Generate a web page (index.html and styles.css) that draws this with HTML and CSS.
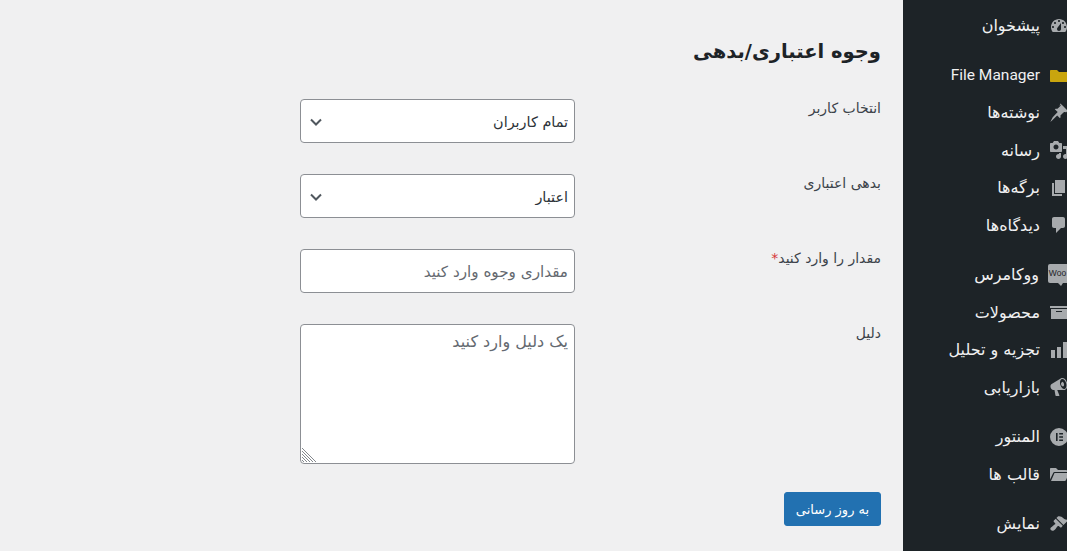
FILE: index.html
```html
<!DOCTYPE html>
<html lang="fa" dir="rtl">
<head>
<meta charset="utf-8">
<title>وجوه اعتباری/بدهی</title>
<link rel="stylesheet" href="styles.css">
</head>
<body>
<nav class="sidebar">
  <ul class="group">
    <li class="item"><svg class="icon" viewBox="0 0 20 20"><path d="M3.76 16h12.48c1.1-1.37 1.76-3.11 1.76-5 0-4.42-3.58-8-8-8s-8 3.58-8 8c0 1.89.66 3.63 1.76 5zM10 4c.55 0 1 .45 1 1s-.45 1-1 1-1-.45-1-1 .45-1 1-1zM6 6c.55 0 1 .45 1 1s-.45 1-1 1-1-.45-1-1 .45-1 1-1zm8 0c.55 0 1 .45 1 1s-.45 1-1 1-1-.45-1-1 .45-1 1-1zm-5.37 5.55L12 7v6c0 1.1-.9 2-2 2s-2-.9-2-2c0-.57.24-1.08.63-1.45zM4 10c.55 0 1 .45 1 1s-.45 1-1 1-1-.45-1-1 .45-1 1-1zm12 0c.55 0 1 .45 1 1s-.45 1-1 1-1-.45-1-1 .45-1 1-1z" fill-rule="evenodd"/></svg><span>پیشخوان</span></li>
  </ul>
  <ul class="group">
    <li class="item"><svg class="icon icon-yellow" viewBox="0 0 20 20"><path d="M1 6c0-.6.4-1 1-1h6l2 2h8c.6 0 1 .4 1 1v8c0 .6-.4 1-1 1H2c-.6 0-1-.4-1-1z"/></svg><span class="latin">File Manager</span></li>
    <li class="item"><svg class="icon" viewBox="0 0 20 20"><path d="M10.44 3.02l1.82-1.82 6.55 6.55-1.82 1.82c-.74-.56-1.74-.62-2.49-.07l-3.1 3.1c.24.91.19 1.93-.37 2.7l-2.87-2.88-5.12 5.13L1.3 18.9l2.4-4.72 4.97-5.14-2.88-2.87c.77-.56 1.79-.61 2.7-.37l3.1-3.1c.55-.75.49-1.75-.07-2.49z"/></svg><span>نوشته‌ها</span></li>
    <li class="item"><svg class="icon" viewBox="0 0 20 20"><path d="M13 11V4c0-.55-.45-1-1-1h-1.67L9 1H5L3.67 3H2c-.55 0-1 .45-1 1v7c0 .55.45 1 1 1h10c.55 0 1-.45 1-1zM7 4.5c1.38 0 2.5 1.12 2.5 2.5S8.38 9.5 7 9.5 4.5 8.38 4.5 7 5.62 4.5 7 4.5zM14 6h5v10.5c0 1.38-1.12 2.5-2.5 2.5S14 17.88 14 16.5s1.12-2.5 2.5-2.5c.17 0 .34.02.5.05V9h-3V6zm-4 8.05V13h2v3.5c0 1.38-1.12 2.5-2.5 2.5S7 17.88 7 16.5 8.12 14 9.5 14c.17 0 .34.02.5.05z"/></svg><span>رسانه</span></li>
    <li class="item"><svg class="icon" viewBox="0 0 20 20"><path d="M6 15V2h10v13H6zm-1 1h8v2H3V5h2v11z"/></svg><span>برگه‌ها</span></li>
    <li class="item"><svg class="icon" viewBox="0 0 20 20"><path d="M5 2h9c1.1 0 2 .9 2 2v7c0 1.1-.9 2-2 2h-2l-5 5v-5H5c-1.1 0-2-.9-2-2V4c0-1.1.9-2 2-2z"/></svg><span>دیدگاه‌ها</span></li>
  </ul>
  <ul class="group">
    <li class="item"><span class="woo"><span class="woo-text">Woo</span></span><span>ووکامرس</span></li>
    <li class="item"><svg class="icon" viewBox="0 0 20 20"><path d="M19 4v2H1V4h18zM2 7h16v10H2V7zm11 3V9H7v1h6z"/></svg><span>محصولات</span></li>
    <li class="item"><svg class="icon" viewBox="0 0 20 20"><path d="M18 18V2h-4v16h4zm-6 0V7H8v11h4zm-6 0v-8H2v8h4z"/></svg><span>تجزیه و تحلیل</span></li>
    <li class="item"><svg class="icon" viewBox="0 0 20 20"><path d="M18.15 5.94c.46 1.62.38 3.22-.02 4.48-.42 1.28-1.26 2.18-2.3 2.48-.16.06-.26.06-.4.06-.06.02-.12.02-.18.02-.06.02-.14.02-.22.02h-6.8l2.22 5.5c.02.14-.06.26-.14.34-.08.1-.24.16-.34.16H6.95c-.1 0-.26-.06-.34-.16-.08-.08-.16-.2-.14-.34l-1-5.5H4.25l-.02-.02c-.5.06-1.08-.18-1.54-.62s-.88-1.08-1.06-1.88c-.24-.8-.2-1.56-.02-2.2.18-.62.58-1.08 1.06-1.3l.02-.02 9-5.4c.1-.06.18-.1.24-.16.06-.04.14-.08.24-.12.16-.08.28-.12.5-.18 1.04-.3 2.24.1 3.22 1 .98.88 1.8 2.24 2.26 3.86zm-2.58 5.98h-.02c.4-.1.74-.34 1.04-.7.58-.7.86-1.76.86-3.04 0-.64-.1-1.3-.28-1.98-.34-1.36-1.02-2.5-1.78-3.24s-1.68-1.1-2.46-.88c-.82.22-1.4.96-1.7 2-.32 1.04-.28 2.36.06 3.72.38 1.36 1 2.5 1.8 3.24.78.74 1.62 1.1 2.48.88zm-2.54-7.08c.22-.04.42-.02.62.04.38.16.76.48 1.02 1s.42 1.2.42 1.78c0 .3-.04.56-.12.8-.18.48-.44.84-.86.94-.34.1-.8-.06-1.14-.4-.36-.32-.66-.8-.82-1.36-.16-.58-.16-1.12 0-1.6.16-.44.48-.76.88-.88z"/></svg><span>بازاریابی</span></li>
  </ul>
  <ul class="group">
    <li class="item"><svg class="icon" viewBox="0 0 20 20"><path fill-rule="evenodd" d="M10 1a9 9 0 1 1 0 18 9 9 0 0 1 0-18zM7 6v8h1.6V6zm3.2 0v1.6H14V6zm0 3.2v1.6H14V9.2zm0 3.2V14H14v-1.6z"/></svg><span>المنتور</span></li>
    <li class="item"><svg class="icon" viewBox="0 0 20 20"><path d="M1 5c0-.6.4-1 1-1h5l2 2h8c.6 0 1 .4 1 1v1H5.5c-.6 0-1 .3-1.2.8L1 15.500zM5.500 9H20l-3 7c-.2.6-.7 1-1.300 1H2z"/></svg><span>قالب ها</span></li>
  </ul>
  <ul class="group">
    <li class="item"><svg class="icon" viewBox="0 0 20 20"><path d="M14.48 11.06L7.41 3.99l1.5-1.5c.5-.56 2.3-.47 3.51.32 1.21.8 1.43 1.28 2.91 2.1 1.18.64 2.45 1.26 4.45.85zm-.71.71L6.700 4.700 4.930 6.470c-.39.39-.39 1.020 0 1.410l1.060 1.060c.39.39.39 1.030 0 1.420-.6.6-1.430 1.110-2.210 1.690-.35.26-.7.53-1.010.84C1.430 13.230.76 14.910 1.980 16.100c1.200 1.200 2.850.55 4.100-.7.3-.3.58-.65.84-1 .58-.78 1.090-1.600 1.690-2.200.39-.39 1.030-.39 1.420 0l1.060 1.060c.39.39 1.020.39 1.410 0z"/></svg><span>نمایش</span></li>
  </ul>
</nav>
<main class="main">
  <h1 class="title">وجوه اعتباری/بدهی</h1>
  <form class="form">
    <div class="row">
      <label class="label">انتخاب کاربر</label>
      <div class="control">
        <select class="field select"><option>تمام کاربران</option></select>
        <svg class="chevron" viewBox="0 0 12 8"><path d="M1 1.500l5 5 5-5"/></svg>
      </div>
    </div>
    <div class="row">
      <label class="label">بدهی اعتباری</label>
      <div class="control">
        <select class="field select"><option>اعتبار</option></select>
        <svg class="chevron" viewBox="0 0 12 8"><path d="M1 1.500l5 5 5-5"/></svg>
      </div>
    </div>
    <div class="row">
      <label class="label">مقدار را وارد کنید<span class="req">*</span></label>
      <div class="control">
        <input class="field field-input" type="text" placeholder="مقداری وجوه وارد کنید">
      </div>
    </div>
    <div class="row">
      <label class="label">دلیل</label>
      <div class="control">
        <textarea class="field area" placeholder="یک دلیل وارد کنید"></textarea>
        <svg class="grip" viewBox="0 0 15 15"><path d="M1 3l11 11M1 6l8 8M1 9l5 5M1 12l2 2M1 0l14 14"/></svg>
      </div>
    </div>
    <div class="actions">
      <button class="button" type="button">به روز رسانی</button>
    </div>
  </form>
</main>
</body>
</html>
```
FILE: styles.css
```css
* { box-sizing: border-box; }
html, body { margin: 0; height: 100%; }
body {
  display: flex;
  height: 551px;
  overflow: hidden;
  background: #f0f0f1;
  font-family: "DejaVu Sans", "Noto Sans", sans-serif;
  font-size: 13px;
  color: #3c434a;
}
.sidebar {
  width: 164px;
  flex: none;
  background: #1d2327;
  padding-top: 7px;
  overflow: hidden;
}
.group {
  list-style: none;
  margin: 0 0 12px;
  padding: 0;
}
.item {
  display: flex;
  align-items: center;
  gap: 9px;
  height: 37.5px;
  color: #f0f0f1;
  font-size: 16px;
  white-space: nowrap;
}
.latin { font-family: Roboto, sans-serif; font-size: 15.5px; }
.icon {
  width: 20px;
  height: 20px;
  flex: none;
  margin-inline-start: -2px;
  fill: #a7aaad;
}
.icon-yellow { fill: #c9a50e; }
.woo {
  position: relative;
  width: 19px;
  height: 19px;
  flex: none;
  margin-top: -3px;
  display: flex;
  align-items: center;
  justify-content: center;
  background: #a7aaad;
  border-radius: 2px 0 0 2px;
}
.woo::after {
  content: "";
  position: absolute;
  left: 10px;
  bottom: -3px;
  border-top: 3px solid #a7aaad;
  border-left: 3px solid transparent;
  border-right: 2px solid transparent;
}
.woo-text {
  direction: ltr;
  font-family: "Liberation Sans", sans-serif;
  font-size: 8.5px;
  color: #1d2327;
}
.main {
  flex: 1;
  padding: 38px 22px 0 0;
}
.title {
  margin: 0 0 33px;
  font-size: 19.5px;
  line-height: 28px;
  font-weight: 700;
  color: #1d2327;
}
.form { display: flex; flex-direction: column; gap: 31px; }
.row {
  display: grid;
  grid-template-columns: 306px 275px;
}
.label { padding-top: 0; line-height: 18px; font-size: 14px; }
.req { color: #d63638; }
.control { position: relative; display: flex; }
.field {
  width: 275px;
  height: 44px;
  padding: 0 6px;
  border: 1px solid #8c8f94;
  border-radius: 4px;
  background: #fff;
  color: #2c3338;
  font-family: inherit;
  font-size: 14.4px;
  direction: rtl;
}
.field-input { font-size: 15.2px; padding-top: 1px; }
.field::placeholder { color: #646970; opacity: 1; }
.select { appearance: none; padding-top: 2px; }
.area { height: 140px; padding: 6px; line-height: 22px; font-size: 16px; resize: none; }
.chevron {
  position: absolute;
  left: 10px;
  top: 19px;
  width: 12px;
  height: 8px;
  fill: none;
  stroke: #50575e;
  stroke-width: 2;
  pointer-events: none;
}
.grip {
  position: absolute;
  left: 1px;
  bottom: 1px;
  width: 15px;
  height: 15px;
  fill: none;
  stroke: #646970;
  stroke-width: 0.8;
  pointer-events: none;
}
.actions { margin-top: -3px; }
.button {
  width: 97px;
  height: 34px;
  padding: 0;
  border: 1px solid #2271b1;
  border-radius: 3px;
  background: #2271b1;
  color: #fff;
  font-family: inherit;
  font-size: 13px;
}
```
